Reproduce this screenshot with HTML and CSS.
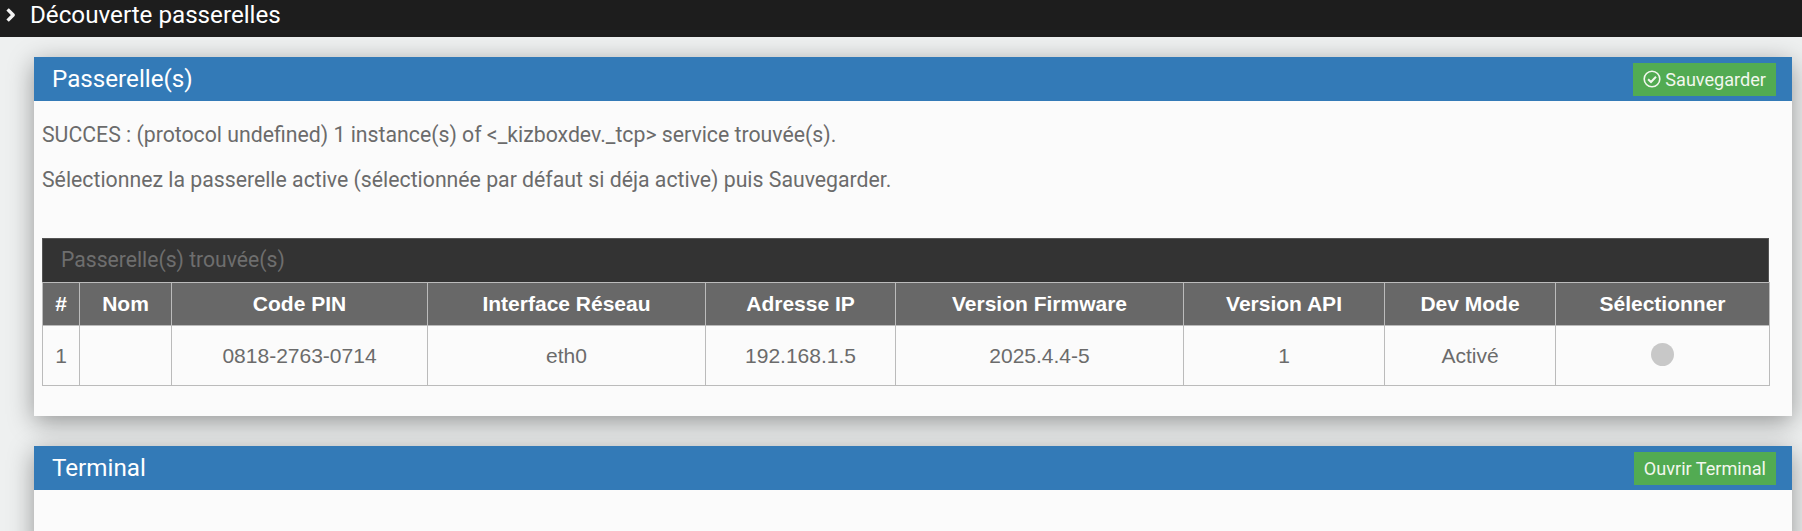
FILE: index.html
```html
<!DOCTYPE html>
<html lang="fr">
<head>
<meta charset="utf-8">
<title>Découverte passerelles</title>
<link rel="stylesheet" href="styles.css">
</head>
<body>
<header class="topbar">
  <svg class="chevron" viewBox="0 0 12 16" width="12" height="16"><path d="M2.6 2.4 8.2 8 2.6 13.6" fill="none" stroke="#f4f4f4" stroke-width="3.4" stroke-linejoin="round"/></svg>
  <span class="topbar-title">Découverte passerelles</span>
</header>
<main class="content">
  <section class="panel panel-first">
    <div class="panel-head">
      <h2 class="panel-title">Passerelle(s)</h2>
      <button class="btn">
        <svg class="btn-icon" viewBox="0 0 18 18" width="18" height="18"><circle cx="9" cy="9" r="7.8" fill="none" stroke="currentColor" stroke-width="1.6"/><path d="M5.1 9.2 8 12 13 6.8" fill="none" stroke="currentColor" stroke-width="2"/></svg>
        Sauvegarder
      </button>
    </div>
    <div class="panel-body">
      <p class="msg">SUCCES : (protocol undefined) 1 instance(s) of &lt;_kizboxdev._tcp&gt; service trouvée(s).</p>
      <p class="msg">Sélectionnez la passerelle active (sélectionnée par défaut si déja active) puis Sauvegarder.</p>
      <div class="table-title">Passerelle(s) trouvée(s)</div>
      <table class="grid">
        <colgroup>
          <col class="c1"><col class="c2"><col class="c3"><col class="c4"><col class="c5"><col class="c6"><col class="c7"><col class="c8"><col class="c9">
        </colgroup>
        <thead>
          <tr><th>#</th><th>Nom</th><th>Code PIN</th><th>Interface Réseau</th><th>Adresse IP</th><th>Version Firmware</th><th>Version API</th><th>Dev Mode</th><th>Sélectionner</th></tr>
        </thead>
        <tbody>
          <tr><td>1</td><td></td><td>0818-2763-0714</td><td>eth0</td><td>192.168.1.5</td><td>2025.4.4-5</td><td>1</td><td>Activé</td><td><span class="radio"></span></td></tr>
        </tbody>
      </table>
    </div>
  </section>
  <section class="panel">
    <div class="panel-head">
      <h2 class="panel-title">Terminal</h2>
      <button class="btn">Ouvrir Terminal</button>
    </div>
    <div class="panel-body panel-body-empty"></div>
  </section>
</main>
</body>
</html>
```

FILE: styles.css
```css
* { box-sizing: border-box; }
html, body { margin: 0; height: 531px; overflow: hidden; }
body {
  background: #eef0f0;
  font-family: Roboto, sans-serif;
  color: #666;
}
.topbar {
  height: 37px;
  background: #1d1d1d;
  color: #fff;
  display: flex;
  align-items: center;
  padding-left: 5px;
  gap: 13px;
}
.chevron { flex: none; margin-top: -8px; }
.topbar-title { font-size: 24.2px; margin-top: -8px; }
.content { padding: 20px 10px 0 34px; }
.panel {
  background: #fbfbfb;
  box-shadow: 0 6px 24px rgba(0, 0, 0, 0.38);
}
.panel-first { height: 359px; margin-bottom: 30px; }
.panel-head {
  height: 44px;
  background: #337ab7;
  display: flex;
  align-items: center;
  justify-content: space-between;
  padding: 0 16px 0 18px;
}
.panel-title { margin: 0; font-size: 24.2px; font-weight: 400; color: #fff; }
.btn {
  height: 33px;
  border: 0;
  padding: 0 10px;
  background: #52ab52;
  color: #f2f7ee;
  font: 400 18.1px Roboto, sans-serif;
  display: flex;
  align-items: center;
  gap: 4px;
}
.btn-icon { flex: none; }
.panel-body { padding: 19px 8px 0; }
.panel-body-empty { height: 60px; }
.msg { margin: 0 0 15px; font-size: 21.25px; line-height: 30px; color: #6b6b6b; }
.table-title {
  margin-top: 43px;
  height: 44px;
  width: 1727px;
  background: #333;
  border: 1px solid #555;
  border-bottom: 0;
  color: #6e6e6e;
  font-size: 21.15px;
  line-height: 42px;
  padding-left: 18px;
}
.grid {
  width: 1727px;
  table-layout: fixed;
  border-collapse: collapse;
  font-family: "Liberation Sans", sans-serif;
  font-size: 21px;
}
.grid th, .grid td { border: 1px solid #bbb; text-align: center; padding: 0; }
.grid th { height: 43px; background: #686868; color: #fff; font-weight: 700; }
.grid td { height: 60px; color: #6b6b6b; }
.c1 { width: 37px; } .c2 { width: 92px; } .c3 { width: 256px; }
.c4 { width: 278px; } .c5 { width: 190px; } .c6 { width: 288px; }
.c7 { width: 201px; } .c8 { width: 171px; } .c9 { width: 214px; }
.radio {
  display: inline-block;
  width: 23px;
  height: 23px;
  border-radius: 50%;
  background: #c8c8c8;
  vertical-align: middle;
  margin-bottom: 2px;
}
```
